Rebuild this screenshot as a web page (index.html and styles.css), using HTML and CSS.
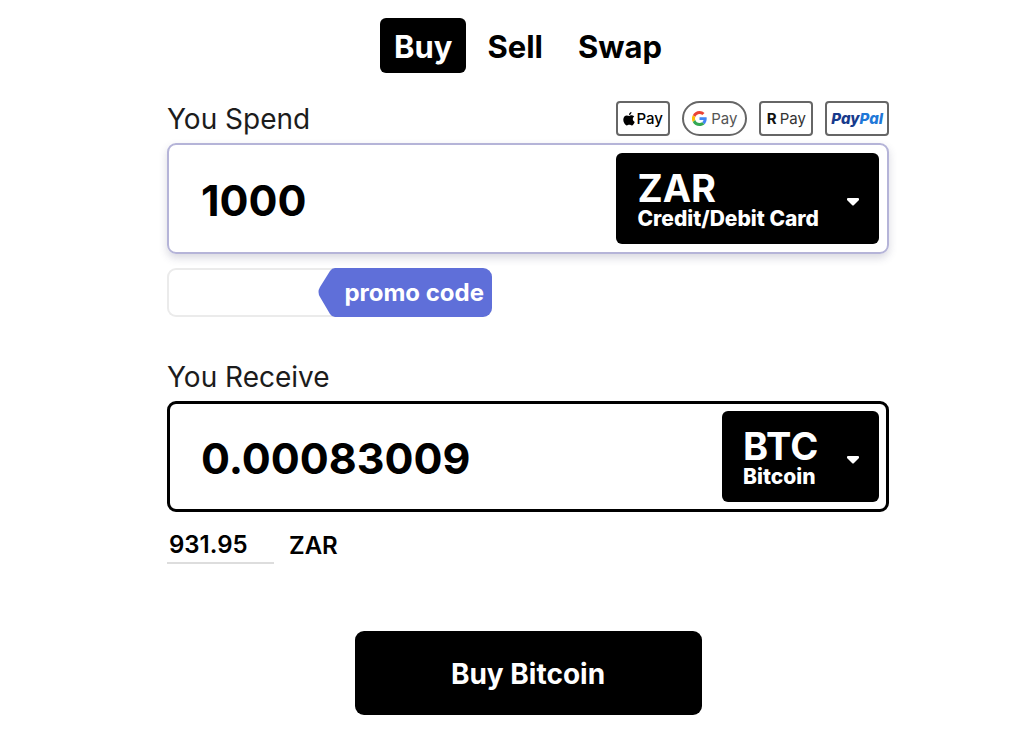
FILE: index.html
```html
<!doctype html>
<html lang="en">

<head>
  <meta charset="UTF-8">
  <meta name="viewport" content="width=device-width, initial-scale=1">
  <title>Buy Bitcoin</title>
  <link rel="stylesheet" href="styles.css">
</head>

<body>
  <form class="exchange">
    <nav class="tabs">
      <button type="button" class="tab tab-active">Buy</button>
      <button type="button" class="tab">Sell</button>
      <button type="button" class="tab">Swap</button>
    </nav>

    <div class="field-head">
      <label class="field-label" for="spend">You Spend</label>
      <div class="payments">
        <span class="pay pay-apple">
          <svg width="12" height="14" viewBox="0 0 12 14" aria-hidden="true">
            <path d="M8.5 0C8.6 1.500 7.500 2.900 6 3 5.900 1.600 7 .2 8.500 0zM6.200 3.900C6.800 3.900 7.600 3.200 8.900 3.300 10 3.400 10.800 3.800 11.300 4.600 9.100 6 9.400 9 11.700 9.900 11.100 11.500 10 13.400 8.800 13.400 7.800 13.400 7.500 12.800 6.300 12.800 5.100 12.800 4.700 13.400 3.800 13.400 2.300 13.400.3 10.500.3 7.600.3 4.900 2 3.400 3.700 3.400 4.800 3.400 5.600 3.900 6.200 3.900z" />
          </svg>Pay</span>
        <span class="pay pay-google">
          <svg width="15" height="15" viewBox="0 0 48 48" aria-hidden="true">
            <path fill="#ea4335" d="M24 9.500c3.500 0 6.700 1.200 9.200 3.600l6.900-6.900C35.900 2.400 30.500 0 24 0 14.600 0 6.500 5.400 2.600 13.200l8 6.200C12.400 13.700 17.700 9.500 24 9.500z" />
            <path fill="#4285f4" d="M47 24.600c0-1.600-.2-3.100-.4-4.600H24v9h12.900c-.6 3-2.300 5.500-4.800 7.200l7.700 6C44.400 38 47 31.800 47 24.600z" />
            <path fill="#fbbc05" d="M10.500 28.600a14.500 14.500 0 0 1 0-9.200l-8-6.200a24 24 0 0 0 0 21.600z" />
            <path fill="#34a853" d="M24 48c6.500 0 11.900-2.100 15.900-5.800l-7.700-6c-2.200 1.500-4.900 2.300-8.200 2.300-6.300 0-11.600-4.200-13.500-9.900l-8 6.200C6.500 42.600 14.600 48 24 48z" />
          </svg>Pay</span>
        <span class="pay pay-revolut"><b>R</b>Pay</span>
        <span class="pay pay-paypal">Pay<i>Pal</i></span>
      </div>
    </div>
    <div class="amount-box amount-spend">
      <input class="amount" id="spend" type="text" value="1000">
      <label class="currency">
        <span class="currency-text">
          <select class="currency-code">
            <option>ZAR</option>
          </select>
          <span class="currency-name">Credit/Debit Card</span>
        </span>
        <svg class="caret" width="12" height="8" viewBox="0 0 12 8" aria-hidden="true">
          <path d="M1 0h10q1 0 1 1v1L7 7q-1 1-2 0L0 2V1q0-1 1-1z" />
        </svg>
      </label>
    </div>

    <div class="promo">
      <input class="promo-input" type="text" aria-label="promo code">
      <button type="button" class="promo-button">
        <svg class="promo-tip" viewBox="0 0 18 49" preserveAspectRatio="none" aria-hidden="true">
          <path d="M18 0h-1q-3 0-5 3L2 19q-3 5 0 10l10 17q2 3 5 3h1z" />
        </svg>
        <span class="promo-text">promo code</span>
      </button>
    </div>

    <div class="field-head">
      <label class="field-label" for="receive">You Receive</label>
    </div>
    <div class="amount-box amount-receive">
      <input class="amount" id="receive" type="text" value="0.00083009">
      <label class="currency">
        <span class="currency-text">
          <select class="currency-code">
            <option>BTC</option>
          </select>
          <span class="currency-name">Bitcoin</span>
        </span>
        <svg class="caret" width="12" height="8" viewBox="0 0 12 8" aria-hidden="true">
          <path d="M1 0h10q1 0 1 1v1L7 7q-1 1-2 0L0 2V1q0-1 1-1z" />
        </svg>
      </label>
    </div>

    <div class="fiat">
      <input class="fiat-input" id="fiat" type="text" value="931.95">
      <label class="fiat-code" for="fiat">ZAR</label>
    </div>

    <button type="submit" class="submit">Buy Bitcoin</button>
  </form>
</body>

</html>
```

FILE: styles.css
```css
* {
  box-sizing: border-box;
}

body {
  margin: 0;
  padding: 18px 16px 23px 48px;
  font-family: Inter, "Liberation Sans", sans-serif;
  color: #000;
  background: #fff;
}

button,
input,
select {
  font: inherit;
  color: inherit;
  border: 0;
}

.exchange {
  display: flex;
  flex-direction: column;
  max-width: 722px;
  margin: 0 auto;
}

/* tabs */
.tabs {
  display: flex;
  justify-content: center;
  gap: 7px;
  margin-bottom: 28px;
}

.tab {
  padding: 10px 14px 8px;
  font-size: 31px;
  font-weight: 700;
  line-height: 37px;
  background: none;
  border-radius: 6px;
}

.tab-active {
  color: #fff;
  background: #000;
}

/* amounts */
.field-head {
  display: flex;
  justify-content: space-between;
  align-items: center;
  min-height: 35px;
  margin-bottom: 7px;
}

.field-label {
  font-size: 28px;
  line-height: 34px;
  color: #1c1c1c;
}

.amount-box {
  display: flex;
  border-radius: 9px;
}

.amount-spend {
  padding: 8px;
  border: 2px solid #b5b4d8;
  box-shadow: 0 4px 8px rgba(60, 60, 100, .2);
}

.amount-receive {
  padding: 7px;
  border: 3px solid #000;
}

.amount {
  flex: 1;
  min-width: 0;
  padding: 2px 24px 0;
  font-size: 43px;
  font-weight: 700;
  background: none;
  outline: 0;
}

.currency {
  display: flex;
  align-items: center;
  gap: 28px;
  padding: 15px 20px 14px 21px;
  color: #fff;
  background: #000;
  border-radius: 6px;
}

.currency-text {
  display: flex;
  flex-direction: column;
  align-items: flex-start;
}

.currency-code {
  appearance: none;
  padding: 0;
  font-size: 38px;
  font-weight: 700;
  line-height: 40px;
  background: #000;
}

.currency-name {
  font-size: 21px;
  font-weight: 800;
  line-height: 22px;
}

.caret {
  margin-top: 6px;
  fill: #fff;
}

/* payment badges */
.payments {
  display: flex;
  gap: 12px;
}

.pay {
  display: flex;
  align-items: center;
  justify-content: center;
  gap: 1px;
  min-width: 54px;
  height: 35px;
  padding: 0 4px;
  font-size: 15px;
  font-weight: 500;
  border: 2px solid #666;
  border-radius: 4px;
}

.pay-google {
  gap: 4px;
  padding: 0 8px;
  font-weight: 400;
  color: #555;
  border-radius: 18px;
}

.pay-revolut {
  gap: 3px;
  font-weight: 400;
  color: #333;
}

.pay-revolut b {
  font-weight: 700;
  color: #111;
}

.pay-paypal {
  gap: 0;
  font-style: italic;
  font-weight: 800;
  color: #173a8c;
}

.pay-paypal i {
  color: #1f78d8;
}

/* promo code */
.promo {
  display: flex;
  align-self: flex-start;
  width: 325px;
  height: 49px;
  margin: 14px 0 42px;
  border-radius: 9px;
  box-shadow: inset 0 0 0 2px #ebebeb;
}

.promo-input {
  flex: 1;
  min-width: 0;
  padding: 0 16px;
  background: none;
  outline: 0;
}

.promo-button {
  display: flex;
  padding: 0;
  color: #fff;
  background: none;
}

.promo-tip {
  width: 18px;
  height: 49px;
  fill: #5f6fd9;
}

.promo-text {
  padding: 0 8px;
  font-size: 24px;
  font-weight: 700;
  line-height: 49px;
  background: #5f6fd9;
  border-radius: 0 9px 9px 0;
}

/* fiat value */
.fiat {
  display: flex;
  gap: 15px;
  margin-top: 15px;
  font-size: 24px;
  font-weight: 600;
}

.fiat-input {
  width: 107px;
  height: 37px;
  padding: 0 2px;
  border-bottom: 2px solid #ddd;
  background: none;
  outline: 0;
}

.fiat-code {
  line-height: 38px;
}

.submit {
  align-self: center;
  width: 347px;
  max-width: 100%;
  margin-top: 66px;
  padding: 25px 24px 23px;
  font-size: 28px;
  font-weight: 700;
  line-height: 36px;
  color: #fff;
  background: #000;
  border-radius: 9px;
}
```
